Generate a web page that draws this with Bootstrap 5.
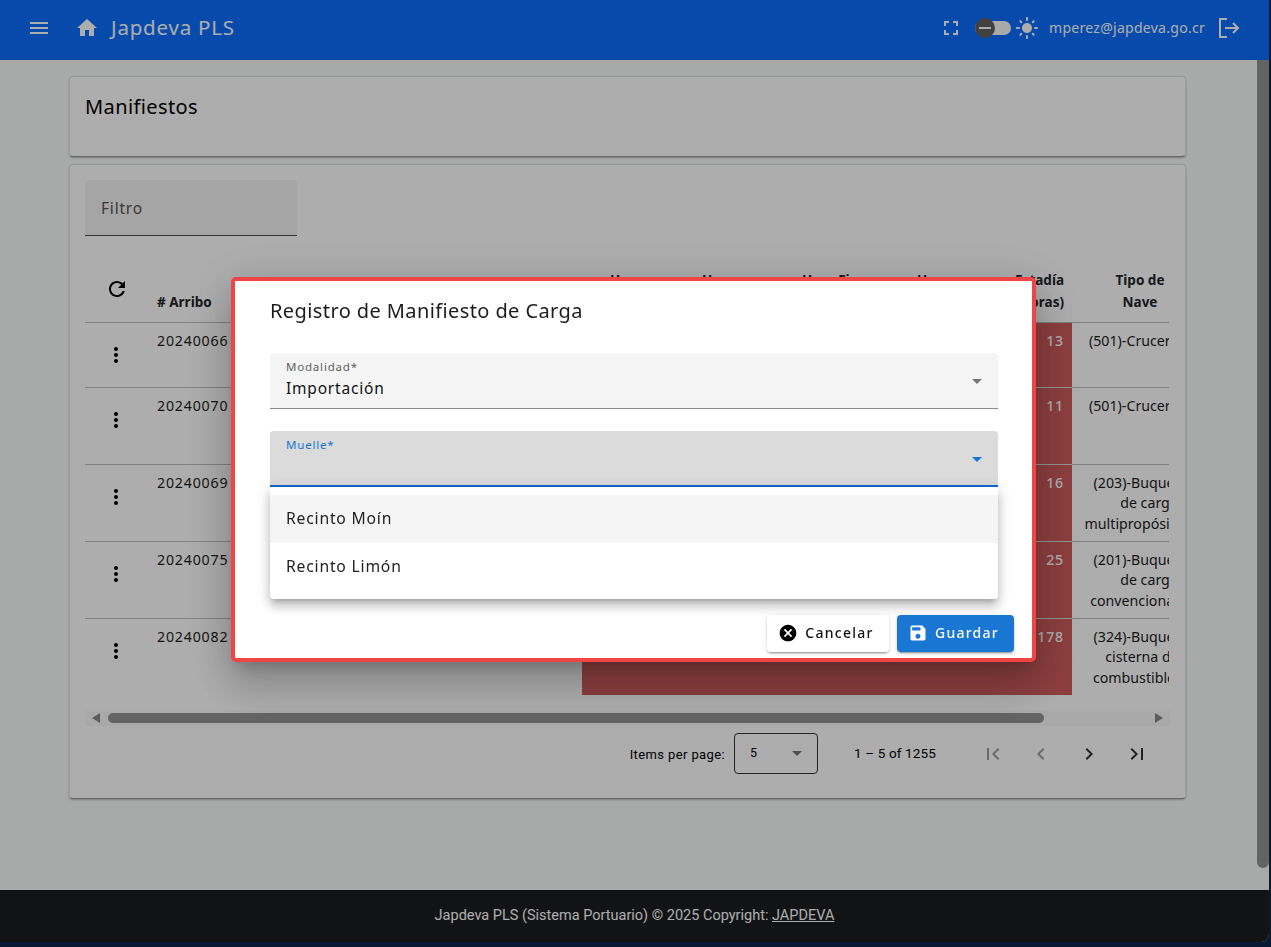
<!DOCTYPE html>
<html lang="es">
<head>
    <meta charset="UTF-8">
    <meta name="viewport" content="width=device-width, initial-scale=1.0">
    <title>Japdeva PLS</title>
    <link href="https://cdn.jsdelivr.net/npm/bootstrap@5.3.0/dist/css/bootstrap.min.css" rel="stylesheet">
    <style>
        html, body { height: 100%; overflow: hidden; }
        body { background: #0d2550; font-family: "Noto Sans", sans-serif; letter-spacing: .05em; color: #000; }
        .app-frame { width: 1269px; height: 942px; border-bottom-right-radius: 8px; overflow: hidden; background: #f8f9fa; }
        .top-bar { height: 60px; padding-bottom: 5px; background: #0d6efd; color: #fff; }
        .menu-icon { margin-left: 27px; }
        .home-icon { margin-left: 24px; }
        .top-title { font-size: 20.5px; margin-left: 12px; }
        .top-mail { font-size: 14px; letter-spacing: .02em; margin-left: 10px; }
        .mode-track { width: 36px; height: 14px; border-radius: 7px; background: #fafafa; margin-left: 12px; margin-right: 4px; position: relative; }
        .mode-thumb { position: absolute; left: 0; top: -3px; width: 20px; height: 20px; border-radius: 50%; background: #616161; display: flex; align-items: center; justify-content: center; }
        .mode-thumb span { width: 12px; height: 2px; background: #fff; }
        .exit-icon { margin: 0 29px 0 13px; }
        .page-body { min-height: 0; }
        .page-wrap { padding: 16px 71px 0 69px; }
        .page-scroll { width: 12px; }
        .page-thumb { height: 808px; background: #939393; border-radius: 0 0 6px 6px; }
        .sheet { border: 1px solid #e3e3e3; border-bottom-color: #999; border-radius: 4px; background: #fff; box-shadow: 0 1px 2px rgba(0,0,0,.25); }
        .title-sheet { height: 81px; padding: 15px 15px; font-size: 20px; letter-spacing: .02em; }
        .list-sheet { height: 635px; margin-top: 7px; padding: 15px 15px 0; }
        .filter-box { width: 212px; height: 56px; background: #f3f3f3; border-bottom: 1px solid #555; border-radius: 4px 4px 0 0; padding: 17px 16px; font-size: 15.5px; color: #555; }
        .table-clip { width: 1084px; overflow: hidden; margin-top: 29px; }
        .port-table { width: 1123px; table-layout: fixed; margin: 0; --bs-table-bg: transparent; }
        .port-table th { height: 57px; padding: 0 0 9px; font-size: 13.5px; font-weight: 700; line-height: 22px; letter-spacing: 0; vertical-align: bottom; border-bottom: 1px solid #bdbdbd; }
        .port-table td { padding: 8px 0 0; font-size: 14.2px; line-height: 20.5px; vertical-align: top; border-bottom: 1px solid #bdbdbd; color: #1c1c1c; }
        .port-table .tip-cell { text-align: center; white-space: nowrap; padding-right: 12px; letter-spacing: 0; }
        .port-table .late-cell { background: #cf5c5c; color: #fff; text-align: right; padding-right: 8px; border-bottom-color: #d9d9d9; font-weight: 500; }
        .port-table .kebab-cell { padding-top: 20px; padding-left: 2px; text-align: center; }
        .port-table .refresh-cell { vertical-align: top; padding-top: 12px; padding-bottom: 0; padding-left: 4px; text-align: center; }
        .port-table tbody tr:last-child td { border-bottom: 0; }
        .arribo-cell { padding-left: 12px !important; }
        .port-table .time-a { padding-left: 28px; }
        .port-table .time-b { padding-left: 12px; }
        .row-a td { height: 65px; }
        .row-b td { height: 77px; }
        .shift-a { display: inline-block; padding-left: 30px; }
        .shift-b { display: inline-block; padding-left: 16px; }
        .col-act { width: 60px; }
        .col-arr { width: 97px; }
        .col-gap { width: 340px; }
        .col-ta { width: 108px; }
        .col-tb { width: 100px; }
        .col-tc { width: 115px; }
        .col-td { width: 95px; }
        .col-est { width: 72px; }
        .col-tip { width: 136px; }
        .hbar { height: 16px; margin-top: 15px; background: #fafafa; }
        .hbar-thumb { width: 936px; height: 10px; margin-left: 8px; border-radius: 5px; background: #939393; }
        .arrow-l { width: 0; height: 0; margin-left: 7px; border: 5px solid transparent; border-left: 0; border-right: 8px solid #8a8a8a; }
        .arrow-r { width: 0; height: 0; margin-left: auto; margin-right: 7px; border: 5px solid transparent; border-right: 0; border-left: 8px solid #8a8a8a; }
        .pager { height: 41px; margin-top: 7px; padding-right: 9px; font-family: Roboto, sans-serif; letter-spacing: 0; }
        .pager-label { font-size: 13px; letter-spacing: .03em; margin-right: 9px; margin-top: 2px; }
        .pager-select { width: 84px; height: 41px; border: 1px solid #333; border-radius: 4px; padding: 0 15px; font-size: 12.5px; }
        .pager-range { font-size: 13.5px; margin: 0 33px 0 36px; letter-spacing: .01em; }
        .pager-btn { width: 48px; text-align: center; opacity: .8; }
        .pager-btn.off { opacity: .38; }
        .caret-down { width: 0; height: 0; border: 5px solid transparent; border-bottom: 0; border-top: 5px solid #757575; }
        .caret-blue { border-top-color: #1976d2; }
        .bottom-bar { height: 52px; background: #1a1c1f; color: #fff; font-family: Roboto, sans-serif; font-size: 14.5px; letter-spacing: 0; }
        .bottom-bar a { color: #fff; }
        .dim-layer { position: fixed; inset: 0; background: rgba(0,0,0,.32); z-index: 1000; }
        .dialog-box { position: fixed; left: 231px; top: 277px; width: 805px; height: 385px; z-index: 1010; background: #fff; border: 4px solid #f04545; border-radius: 5px; padding: 18px 18px 6px 35px; box-shadow: 0 11px 15px -7px rgba(0,0,0,.2), 0 24px 38px 3px rgba(0,0,0,.14), 0 9px 46px 8px rgba(0,0,0,.12); }
        .dialog-title { font-size: 20px; line-height: 24px; height: 24px; margin-bottom: 30px; letter-spacing: .02em; color: #1c1c1c; }
        .fill-field { width: 728px; height: 56px; background: #f5f5f5; border-radius: 4px 4px 0 0; border-bottom: 1px solid #8a8a8a; padding: 6px 16px 0; position: relative; }
        .fill-field + .fill-field { margin-top: 22px; }
        .fill-label { font-size: 11.5px; line-height: 16px; color: #5f5f5f; }
        .fill-value { font-size: 15.5px; line-height: 22px; margin-top: 2px; color: #111; }
        .fill-caret { position: absolute; right: 16px; top: 26px; }
        .fill-open { background: #dbdbdb; border-bottom: 2px solid #1069cc; }
        .fill-open .fill-label { color: #1976d2; }
        .option-menu { position: absolute; left: 0; top: 56px; width: 728px; height: 112px; padding: 8px 0; background: #fff; border-radius: 0 0 4px 4px; z-index: 2; box-shadow: 0 5px 5px -3px rgba(0,0,0,.2), 0 8px 10px 1px rgba(0,0,0,.14), 0 3px 14px 2px rgba(0,0,0,.12); }
        .option-row { height: 48px; padding: 0 16px; display: flex; align-items: center; font-size: 15.7px; color: #222; }
        .option-on { background: #f5f5f5; }
        .dialog-foot { margin-top: 128px; gap: 8px; }
        .act-btn { height: 37px; padding: 0 4px 2px 0; display: flex; align-items: center; justify-content: center; gap: 7px; border: 0; border-radius: 4px; font-size: 14px; letter-spacing: .09em; font-weight: 500; box-shadow: 0 3px 1px -2px rgba(0,0,0,.2), 0 2px 2px 0 rgba(0,0,0,.14), 0 1px 5px 0 rgba(0,0,0,.12); }
        .btn-cancel { width: 122px; background: #fff; color: #111; }
        .btn-save { width: 117px; background: #1976d2; color: #fff; }
    </style>
</head>
<body>

    <div class="app-frame d-flex flex-column">
        <header class="top-bar d-flex align-items-center flex-shrink-0">
            <svg class="menu-icon flex-shrink-0" width="24" height="24" viewBox="0 0 24 24" fill="#fff"><path d="M3 18h18v-2H3v2zm0-5h18v-2H3v2zm0-7v2h18V6H3z"/></svg>
            <svg class="home-icon flex-shrink-0" width="24" height="24" viewBox="0 0 24 24" fill="#fff"><path d="M10 20v-6h4v6h5v-8h3L12 3 2 12h3v8z"/></svg>
            <span class="top-title">Japdeva PLS</span>
            <div class="ms-auto d-flex align-items-center">
                <svg width="24" height="24" viewBox="0 0 24 24" fill="#fff"><path d="M7 14H5v5h5v-2H7v-3zm-2-4h2V7h3V5H5v5zm12 7h-3v2h5v-5h-2v3zM14 5v2h3v3h2V5h-5z"/></svg>
                <div class="mode-track"><div class="mode-thumb"><span></span></div></div>
                <svg width="24" height="24" viewBox="0 0 24 24" fill="#fff"><path d="M12 7c-2.76 0-5 2.24-5 5s2.24 5 5 5 5-2.24 5-5-2.24-5-5-5zM2 13h2c.55 0 1-.45 1-1s-.45-1-1-1H2c-.55 0-1 .45-1 1s.45 1 1 1zm18 0h2c.55 0 1-.45 1-1s-.45-1-1-1h-2c-.55 0-1 .45-1 1s.45 1 1 1zM11 2v2c0 .55.45 1 1 1s1-.45 1-1V2c0-.55-.45-1-1-1s-1 .45-1 1zm0 18v2c0 .55.45 1 1 1s1-.45 1-1v-2c0-.55-.45-1-1-1s-1 .45-1 1zM5.99 4.58c-.39-.39-1.03-.39-1.41 0-.39.39-.39 1.03 0 1.41l1.06 1.06c.39.39 1.03.39 1.41 0s.39-1.03 0-1.41L5.99 4.58zm12.37 12.37c-.39-.39-1.03-.39-1.41 0-.39.39-.39 1.03 0 1.41l1.06 1.06c.39.39 1.03.39 1.41 0 .39-.39.39-1.03 0-1.41l-1.06-1.06zm1.06-10.96c.39-.39.39-1.03 0-1.41-.39-.39-1.03-.39-1.41 0l-1.06 1.06c-.39.39-.39 1.03 0 1.41s1.03.39 1.41 0l1.06-1.06zM7.05 18.36c.39-.39.39-1.03 0-1.41-.39-.39-1.03-.39-1.41 0l-1.06 1.06c-.39.39-.39 1.03 0 1.41s1.03.39 1.41 0l1.06-1.06z"/></svg>
                <span class="top-mail">mperez@japdeva.go.cr</span>
                <svg class="exit-icon" width="22" height="22" viewBox="0 0 22 22" fill="none" stroke="#fff" stroke-width="2"><path d="M9 2H2v18h7"/><path d="M7 11h13"/><path d="M15 6l5 5-5 5"/></svg>
            </div>
        </header>

        <div class="page-body d-flex flex-grow-1">
            <main class="page-wrap flex-grow-1">
                <div class="sheet title-sheet">Manifiestos</div>
                <div class="sheet list-sheet">
                    <div class="filter-box">Filtro</div>
                    <div class="table-clip">
                        <table class="table port-table">
                            <colgroup>
                                <col class="col-act"><col class="col-arr"><col class="col-gap">
                                <col class="col-ta"><col class="col-tb"><col class="col-tc"><col class="col-td">
                                <col class="col-est"><col class="col-tip">
                            </colgroup>
                            <thead>
                                <tr>
                                    <th class="refresh-cell"><svg width="24" height="24" viewBox="0 0 24 24"><path d="M17.65 6.35C16.2 4.9 14.21 4 12 4c-4.42 0-7.99 3.58-7.99 8s3.57 8 7.99 8c3.73 0 6.84-2.55 7.73-6h-2.08c-.82 2.33-3.04 4-5.65 4-3.31 0-6-2.69-6-6s2.69-6 6-6c1.66 0 3.14.69 4.22 1.78L13 11h7V4l-2.35 2.35z"/></svg></th>
                                    <th class="arribo-cell"># Arribo</th>
                                    <th></th>
                                    <th class="time-a">Hora<br>Arribo</th>
                                    <th class="time-b">Hora<br>Atraque</th>
                                    <th class="time-b">Hora Fin<br>Operación</th>
                                    <th class="time-b">Hora<br>Zarpe</th>
                                    <th class="text-end pe-2">Estadía<br>(Horas)</th>
                                    <th class="text-center">Tipo de<br>Nave</th>
                                </tr>
                            </thead>
                            <tbody>
                                <tr class="row-a">
                                    <td class="kebab-cell"><svg width="24" height="24" viewBox="0 0 24 24"><path d="M12 8c1.1 0 2-.9 2-2s-.9-2-2-2-2 .9-2 2 .9 2 2 2zm0 2c-1.1 0-2 .9-2 2s.9 2 2 2 2-.9 2-2-.9-2-2-2zm0 6c-1.1 0-2 .9-2 2s.9 2 2 2 2-.9 2-2-.9-2-2-2z"/></svg></td>
                                    <td class="arribo-cell">20240066</td><td></td>
                                    <td class="late-cell"></td><td class="late-cell"></td><td class="late-cell"></td><td class="late-cell"></td>
                                    <td class="late-cell">13</td>
                                    <td class="tip-cell">(501)-Crucero</td>
                                </tr>
                                <tr class="row-b">
                                    <td class="kebab-cell"><svg width="24" height="24" viewBox="0 0 24 24"><path d="M12 8c1.1 0 2-.9 2-2s-.9-2-2-2-2 .9-2 2 .9 2 2 2zm0 2c-1.1 0-2 .9-2 2s.9 2 2 2 2-.9 2-2-.9-2-2-2zm0 6c-1.1 0-2 .9-2 2s.9 2 2 2 2-.9 2-2-.9-2-2-2z"/></svg></td>
                                    <td class="arribo-cell">20240070</td><td></td>
                                    <td class="late-cell"></td><td class="late-cell"></td><td class="late-cell"></td><td class="late-cell"></td>
                                    <td class="late-cell">11</td>
                                    <td class="tip-cell">(501)-Crucero</td>
                                </tr>
                                <tr class="row-b">
                                    <td class="kebab-cell"><svg width="24" height="24" viewBox="0 0 24 24"><path d="M12 8c1.1 0 2-.9 2-2s-.9-2-2-2-2 .9-2 2 .9 2 2 2zm0 2c-1.1 0-2 .9-2 2s.9 2 2 2 2-.9 2-2-.9-2-2-2zm0 6c-1.1 0-2 .9-2 2s.9 2 2 2 2-.9 2-2-.9-2-2-2z"/></svg></td>
                                    <td class="arribo-cell">20240069</td><td></td>
                                    <td class="late-cell"></td><td class="late-cell"></td><td class="late-cell"></td><td class="late-cell"></td>
                                    <td class="late-cell">16</td>
                                    <td class="tip-cell">(203)-Buque<br><span class="shift-a">de carga</span><br>multipropósito</td>
                                </tr>
                                <tr class="row-b">
                                    <td class="kebab-cell"><svg width="24" height="24" viewBox="0 0 24 24"><path d="M12 8c1.1 0 2-.9 2-2s-.9-2-2-2-2 .9-2 2 .9 2 2 2zm0 2c-1.1 0-2 .9-2 2s.9 2 2 2 2-.9 2-2-.9-2-2-2zm0 6c-1.1 0-2 .9-2 2s.9 2 2 2 2-.9 2-2-.9-2-2-2z"/></svg></td>
                                    <td class="arribo-cell">20240075</td><td></td>
                                    <td class="late-cell"></td><td class="late-cell"></td><td class="late-cell"></td><td class="late-cell"></td>
                                    <td class="late-cell">25</td>
                                    <td class="tip-cell">(201)-Buque<br><span class="shift-a">de carga</span><br>convencional</td>
                                </tr>
                                <tr class="row-b">
                                    <td class="kebab-cell"><svg width="24" height="24" viewBox="0 0 24 24"><path d="M12 8c1.1 0 2-.9 2-2s-.9-2-2-2-2 .9-2 2 .9 2 2 2zm0 2c-1.1 0-2 .9-2 2s.9 2 2 2 2-.9 2-2-.9-2-2-2zm0 6c-1.1 0-2 .9-2 2s.9 2 2 2 2-.9 2-2-.9-2-2-2z"/></svg></td>
                                    <td class="arribo-cell">20240082</td><td></td>
                                    <td class="late-cell"></td><td class="late-cell"></td><td class="late-cell"></td><td class="late-cell"></td>
                                    <td class="late-cell">178</td>
                                    <td class="tip-cell">(324)-Buque<br><span class="shift-b">cisterna de</span><br>combustible</td>
                                </tr>
                            </tbody>
                        </table>
                    </div>
                    <div class="hbar d-flex align-items-center">
                        <div class="arrow-l"></div>
                        <div class="hbar-thumb"></div>
                        <div class="arrow-r"></div>
                    </div>
                    <div class="pager d-flex align-items-center justify-content-end">
                        <span class="pager-label">Items per page:</span>
                        <div class="pager-select d-flex align-items-center justify-content-between"><span>5</span><span class="caret-down"></span></div>
                        <span class="pager-range">1 – 5 of 1255</span>
                        <div class="pager-btn off"><svg width="24" height="24" viewBox="0 0 24 24"><path d="M18.41 16.59L13.82 12l4.59-4.59L17 6l-6 6 6 6zM6 6h2v12H6z"/></svg></div>
                        <div class="pager-btn off"><svg width="24" height="24" viewBox="0 0 24 24"><path d="M15.41 7.41L14 6l-6 6 6 6 1.41-1.41L10.83 12z"/></svg></div>
                        <div class="pager-btn"><svg width="24" height="24" viewBox="0 0 24 24"><path d="M10 6L8.59 7.41 13.17 12l-4.58 4.59L10 18l6-6z"/></svg></div>
                        <div class="pager-btn"><svg width="24" height="24" viewBox="0 0 24 24"><path d="M5.59 7.41L10.18 12l-4.59 4.59L7 18l6-6-6-6zM16 6h2v12h-2z"/></svg></div>
                    </div>
                </div>
            </main>
            <div class="page-scroll flex-shrink-0"><div class="page-thumb"></div></div>
        </div>

        <footer class="bottom-bar d-flex align-items-center justify-content-center flex-shrink-0">
            <span>Japdeva PLS (Sistema Portuario) © 2025 Copyright: <a href="#">JAPDEVA</a></span>
        </footer>
    </div>

    <div class="dim-layer"></div>

    <div class="dialog-box">
        <div class="dialog-title">Registro de Manifiesto de Carga</div>
        <div class="fill-field">
            <div class="fill-label">Modalidad*</div>
            <div class="fill-value">Importación</div>
            <span class="caret-down fill-caret"></span>
        </div>
        <div class="fill-field fill-open">
            <div class="fill-label">Muelle*</div>
            <span class="caret-down caret-blue fill-caret"></span>
            <div class="option-menu">
                <div class="option-row option-on">Recinto Moín</div>
                <div class="option-row">Recinto Limón</div>
            </div>
        </div>
        <div class="dialog-foot d-flex justify-content-end">
            <button type="button" class="act-btn btn-cancel">
                <svg width="20" height="20" viewBox="0 0 24 24"><path d="M12 2C6.47 2 2 6.47 2 12s4.47 10 10 10 10-4.47 10-10S17.53 2 12 2zm5 13.59L15.59 17 12 13.41 8.41 17 7 15.59 10.59 12 7 8.41 8.41 7 12 10.59 15.59 7 17 8.41 13.41 12 17 15.59z"/></svg>
                Cancelar
            </button>
            <button type="button" class="act-btn btn-save">
                <svg width="20" height="20" viewBox="0 0 24 24" fill="#fff"><path d="M17 3H5c-1.11 0-2 .9-2 2v14c0 1.1.89 2 2 2h14c1.1 0 2-.9 2-2V7l-4-4zm-5 16c-1.66 0-3-1.34-3-3s1.34-3 3-3 3 1.34 3 3-1.34 3-3 3zm3-10H5V5h10v4z"/></svg>
                Guardar
            </button>
        </div>
    </div>

    <script src="https://cdn.jsdelivr.net/npm/bootstrap@5.3.0/dist/js/bootstrap.bundle.min.js"></script>
</body>
</html>
